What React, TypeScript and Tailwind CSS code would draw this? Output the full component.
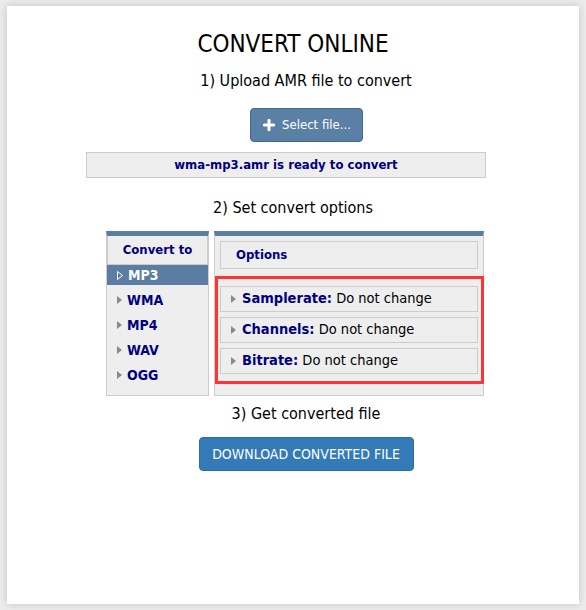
import { Plus } from 'lucide-react';

const formats = ['MP3', 'WMA', 'MP4', 'WAV', 'OGG'];

const options = [
  { label: 'Samplerate:', value: 'Do not change' },
  { label: 'Channels:', value: 'Do not change' },
  { label: 'Bitrate:', value: 'Do not change' },
];

const Arrow = ({ selected = false }: { selected?: boolean }) =>
  selected ? (
    <svg width="6" height="9" viewBox="0 0 6 9" className="shrink-0">
      <path d="M0.5 0.5 L5.5 4.5 L0.5 8.5 Z" fill="none" stroke="#ffffff" strokeWidth="1" />
    </svg>
  ) : (
    <svg width="5" height="8" viewBox="0 0 5 8" className="shrink-0">
      <path d="M0 0 L5 4 L0 8 Z" fill="#8a8a8a" />
    </svg>
  );

export default function App() {
  return (
    <div
      className="min-h-screen bg-[#ececec] pt-[6px] pl-[7px]"
      style={{ fontFamily: "'DejaVu Sans Condensed', 'DejaVu Sans', sans-serif" }}
    >
      <div className="w-[572px] h-[598px] bg-white shadow-[0_0_8px_rgba(0,0,0,0.18)] flex flex-col items-center">
        <h1 className="mt-[24px] text-[24px] leading-[29px] text-black">CONVERT ONLINE</h1>

        <p className="mt-[12px] ml-[26px] text-[16px] leading-[20px] text-black">
          1) Upload AMR file to convert
        </p>

        <button className="mt-[17px] ml-[26px] w-[113px] h-[34px] rounded-[4px] border border-[#3f6890] bg-[#5b80a6] text-white text-[13px] flex items-center justify-center gap-[5px]">
          <Plus size={16} strokeWidth={4.5} />
          Select file...
        </button>

        <div className="mt-[10px] mr-[14px] w-[400px] h-[26px] border border-[#cccccc] bg-[#eeeeee] flex items-center justify-center text-[13px] font-bold text-[#000080]">
          wma-mp3.amr is ready to convert
        </div>

        <p className="mt-[20px] text-[16px] leading-[20px] text-black">2) Set convert options</p>

        <div className="mt-[13px] ml-[4px] flex gap-[5px]">
          {/* formats */}
          <div className="w-[103px] h-[165px] border border-[#cccccc] border-t-[5px] border-t-[#5b7da2] bg-[#eeeeee]">
            <div className="h-[29px] border border-[#cccccc] border-t-0 flex items-center justify-center text-[13px] font-bold text-[#000080]">
              Convert to
            </div>
            <ul>
              {formats.map((f, i) => (
                <li
                  key={f}
                  className={`h-[20px] mb-[5px] pl-[10px] flex items-center gap-[5px] text-[14px] font-bold ${
                    i === 0 ? 'bg-[#5b7da2] text-white' : 'text-[#000080]'
                  }`}
                >
                  <Arrow selected={i === 0} />
                  {f}
                </li>
              ))}
            </ul>
          </div>

          {/* options */}
          <div className="w-[270px] h-[165px] border border-[#cccccc] border-t-[5px] border-t-[#5b7da2] bg-[#eeeeee]">
            <div className="mx-[5px] mt-[5px] h-[28px] border border-[#cccccc] flex items-center pl-[15px] text-[13px] font-bold text-[#000080]">
              Options
            </div>
            <div className="mt-[7px] mr-[-1px] border-[3px] border-[#ff3333] pt-[7px] pb-[7px] pl-[2px] pr-[3px] flex flex-col gap-[5px]">
              {options.map((o) => (
                <div
                  key={o.label}
                  className="h-[26px] border border-[#cccccc] flex items-center pl-[10px] gap-[6px] text-[14.5px]"
                >
                  <Arrow />
                  <span>
                    <span className="font-bold text-[#000080]">{o.label}</span>{' '}
                    <span className="text-black">{o.value}</span>
                  </span>
                </div>
              ))}
            </div>
          </div>
        </div>

        <p className="mt-[8px] ml-[26px] text-[16px] leading-[20px] text-black">3) Get converted file</p>

        <button className="mt-[13px] ml-[26px] w-[215px] h-[34px] rounded-[4px] border border-[#2e6da4] bg-[#337ab7] text-white text-[14px]">
          DOWNLOAD CONVERTED FILE
        </button>
      </div>
    </div>
  );
}
